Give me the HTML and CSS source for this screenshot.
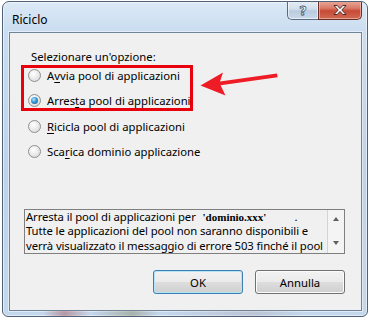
FILE: index.html
```html
<!DOCTYPE html>
<html lang="it">
<head>
    <meta charset="UTF-8">
    <meta name="viewport" content="width=device-width, initial-scale=1.0">
    <title>Riciclo</title>
    <link rel="stylesheet" href="styles.css">
</head>
<body>
    <div class="window">
        <div class="titlebar">
            <span class="title">Riciclo</span>
            <div class="caption">
                <div class="cap-btn help"><span>?</span></div>
                <div class="cap-btn close">
                    <svg width="16" height="12" viewBox="0 0 16 12">
                        <path d="M2 1.5h3.2L8 4.6l2.8-3.1H14L9.8 6l4.2 4.5h-3.2L8 7.4l-2.8 3.1H2L6.2 6z" fill="#fff" stroke="#4a2a2a" stroke-width="1" stroke-linejoin="round"/>
                    </svg>
                </div>
            </div>
        </div>

        <div class="client">
            <div class="options">
                <p class="prompt">Selezionare un'opzione:</p>
                <div class="mark-box">
                    <label class="radio"><span class="dot"></span><span>A<u>v</u>via pool di applicazioni</span></label>
                    <label class="radio"><span class="dot checked"></span><span>Arres<u>t</u>a pool di applicazioni</span></label>
                </div>
                <label class="radio outside"><span class="dot"></span><span><u>R</u>icicla pool di applicazioni</span></label>
                <label class="radio outside last"><span class="dot"></span><span>Sca<u>r</u>ica dominio applicazione</span></label>
            </div>

            <div class="desc">
                <div class="desc-text">
                    <div class="line">Arresta il pool di applicazioni per <span class="domain">'dominio.xxx'</span><span class="dot-end">.</span></div>
                    <div class="line">Tutte le applicazioni del pool non saranno disponibili e</div>
                    <div class="line">verrà visualizzato il messaggio di errore 503 finché il pool</div>
                </div>
                <div class="scroll">
                    <span class="arr up"></span>
                    <span class="arr down"></span>
                </div>
            </div>

            <div class="actions">
                <button class="btn default">OK</button>
                <button class="btn">Annulla</button>
            </div>
        </div>

        <!-- annotation arrow -->
        <svg class="arrow" width="90" height="32" viewBox="0 0 90 32">
            <polygon points="5.5,17.5 28,4.5 25,13.6 82,5.4 82.6,9.2 25.6,17.2 30.5,27.5" fill="#ee1c24"/>
        </svg>
    </div>
</body>
</html>
```

FILE: styles.css
```css
body {
    margin: 0;
    background: #fff;
    font-family: "Noto Sans", sans-serif;
    font-size: 11.3px;
    color: #000;
}
.window {
    position: relative;
    margin: 1px 0 0 2px;
    width: 366px;
    height: 316px;
    box-sizing: border-box;
    border: 1px solid #4e6178;
    border-radius: 7px 7px 6px 6px;
    background: linear-gradient(180deg, #dce9f6 0%, #c9dcf0 10%, #bdd3ea 55%, #c4d8ec 100%);
    box-shadow: inset 0 0 0 1px rgba(255,255,255,0.55);
    display: flex;
    flex-direction: column;
    overflow: hidden;
}
.window::after {
    content: "";
    position: absolute;
    left: 40px;
    right: 60px;
    bottom: 0;
    height: 5px;
    background: linear-gradient(90deg, rgba(180,120,130,0) 0%, rgba(170,110,120,0.6) 8%, rgba(190,200,215,0) 18%, rgba(140,140,110,0.5) 34%, rgba(190,200,215,0) 44%, rgba(170,160,170,0.35) 80%, rgba(190,200,215,0) 100%);
}
.titlebar {
    height: 30px;
    display: flex;
    align-items: flex-start;
    padding-left: 9px;
}
.title {
    margin-top: 10px;
    line-height: 15px;
    font-size: 12px;
}
.caption {
    margin-left: auto;
    margin-right: 5px;
    margin-top: -1px;
    display: flex;
}
.cap-btn {
    height: 19px;
    box-sizing: border-box;
    border: 1px solid #5a6b80;
    border-top: none;
    display: flex;
    align-items: center;
    justify-content: center;
}
.help {
    width: 31px;
    border-right: none;
    border-radius: 0 0 0 5px;
    background: linear-gradient(180deg, #e7eef6 0%, #d2dfec 45%, #b9cbdf 55%, #c9d9ea 100%);
    box-shadow: inset 0 0 0 1px rgba(255,255,255,0.6);
}
.help span {
    font-family: "DejaVu Sans", sans-serif;
    font-weight: bold;
    font-size: 13px;
    line-height: 13px;
    color: #fff;
    -webkit-text-stroke: 0.8px #4b5868;
}
.close {
    width: 44px;
    border-radius: 0 0 5px 0;
    border-color: #6a2c25;
    background: linear-gradient(180deg, #e9aa9b 0%, #d97a68 40%, #c74a36 55%, #cf6a52 100%);
    box-shadow: inset 0 0 0 1px rgba(255,210,200,0.55);
}
.client {
    flex: 1;
    margin: 0 5px 5px 6px;
    background: #f0f0f0;
    border: 1px solid #6f8399;
    box-shadow: 0 0 0 1px rgba(255,255,255,0.5);
    display: flex;
    flex-direction: column;
}
.options {
    padding: 16px 0 0 11px;
}
.prompt {
    margin: 0 0 0 10px;
    line-height: 16px;
    height: 16px;
}
.mark-box {
    width: 172px;
    box-sizing: border-box;
    border: 3px solid #e8000d;
    padding-left: 4px;
    display: flex;
    flex-direction: column;
    gap: 10px;
}
.radio {
    display: flex;
    align-items: center;
    gap: 6px;
    height: 15px;
    line-height: 15px;
    white-space: nowrap;
}
.radio u {
    text-decoration-thickness: 1px;
    text-underline-offset: 2px;
}
.outside {
    margin: 8px 0 0 7px;
}
.outside.last {
    margin-top: 10px;
}
.dot {
    position: relative;
    width: 13px;
    height: 13px;
    flex: none;
    box-sizing: border-box;
    border-radius: 50%;
    border: 1px solid #8f8f8f;
    background: radial-gradient(circle at 40% 35%, #ffffff 0%, #ececec 45%, #d2d2d2 100%);
}
.dot.checked::after {
    content: "";
    position: absolute;
    left: 2px;
    top: 2px;
    width: 7px;
    height: 7px;
    border-radius: 50%;
    background: radial-gradient(circle at 40% 35%, #b6e6fb 0%, #3596d6 45%, #1a4f7c 100%);
}
.desc {
    margin: 50px 0 0 14px;
    width: 321px;
    height: 45px;
    box-sizing: border-box;
    border: 1px solid #7f7f7f;
    background: #f0f0f0;
    display: flex;
}
.desc-text {
    flex: 1;
    overflow: hidden;
    padding-left: 1px;
    line-height: 14.3px;
    letter-spacing: -0.1px;
}
.line {
    white-space: nowrap;
}
.domain {
    font-family: "Liberation Serif", serif;
    font-weight: bold;
    font-size: 11px;
    letter-spacing: 0;
    margin-left: 4px;
}
.dot-end {
    margin-left: 28px;
}
.scroll {
    width: 17px;
    flex: none;
    border-left: 1px solid #d4d4d4;
    background: #f4f4f4;
    display: flex;
    flex-direction: column;
    align-items: center;
    justify-content: space-between;
    padding: 7px 0 8px;
    box-sizing: border-box;
}
.arr {
    width: 0;
    height: 0;
    border-left: 3.5px solid transparent;
    border-right: 3.5px solid transparent;
}
.arr.up {
    border-bottom: 4px solid #606060;
}
.arr.down {
    border-top: 4px solid #606060;
}
.actions {
    margin-top: 16px;
    display: flex;
    justify-content: flex-end;
    gap: 12px;
    padding-right: 16px;
}
.btn {
    width: 90px;
    height: 24px;
    padding: 0;
    font-family: "Noto Sans", sans-serif;
    font-size: 11.3px;
    color: #000;
    border: 1px solid #707070;
    border-radius: 3px;
    background: linear-gradient(180deg, #f2f2f2 0%, #ebebeb 48%, #dddddd 52%, #cfcfcf 100%);
    box-shadow: inset 0 0 0 1px #fcfcfc;
}
.btn.default {
    border-color: #3c7fb1;
    box-shadow: inset 0 0 0 1px #b5e3f8;
}
.arrow {
    position: absolute;
    left: 192px;
    top: 66px;
}
```
